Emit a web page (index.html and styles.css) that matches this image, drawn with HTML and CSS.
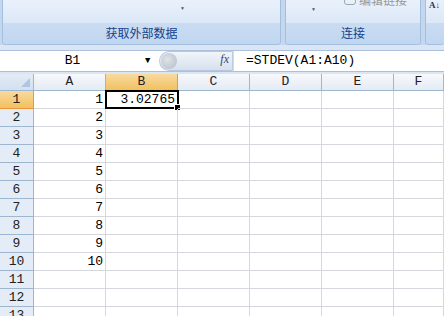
FILE: index.html
```html
<!DOCTYPE html>
<html lang="zh-CN">
<head>
    <meta charset="UTF-8">
    <title>STDEV</title>
    <link rel="stylesheet" href="styles.css">
</head>
<body>
    <div class="ribbon">
        <div class="group group-data">
            <div class="group-body"><span class="drop">▼</span></div>
            <div class="group-label">获取外部数据</div>
        </div>
        <div class="group group-link">
            <div class="group-body">
                <span class="drop">▼</span>
                <span class="cut-text"><span class="link-icon"></span>编辑链接</span>
            </div>
            <div class="group-label">连接</div>
        </div>
        <div class="group group-sort">
            <div class="group-body"><span class="sort-icon">A<span class="arrow">↓</span></span></div>
            <div class="group-label"></div>
        </div>
    </div>
    <div class="strip"></div>
    <div class="formula-bar">
        <div class="name-box">B1</div>
        <div class="name-drop">▼</div>
        <div class="fx-pill"><span class="knob"></span><span class="fx">fx</span></div>
        <div class="formula">=STDEV(A1:A10)</div>
    </div>
    <div class="strip thin"></div>
    <div class="sheet">
        <div class="corner"></div>
        <div class="col-head">A</div>
        <div class="col-head active">B</div>
        <div class="col-head">C</div>
        <div class="col-head">D</div>
        <div class="col-head">E</div>
        <div class="col-head">F</div>

        <div class="row-head active">1</div><div class="cell num">1</div><div class="cell num selected">3.02765<span class="handle"></span></div><div class="cell"></div><div class="cell"></div><div class="cell"></div><div class="cell"></div>
        <div class="row-head">2</div><div class="cell num">2</div><div class="cell"></div><div class="cell"></div><div class="cell"></div><div class="cell"></div><div class="cell"></div>
        <div class="row-head">3</div><div class="cell num">3</div><div class="cell"></div><div class="cell"></div><div class="cell"></div><div class="cell"></div><div class="cell"></div>
        <div class="row-head">4</div><div class="cell num">4</div><div class="cell"></div><div class="cell"></div><div class="cell"></div><div class="cell"></div><div class="cell"></div>
        <div class="row-head">5</div><div class="cell num">5</div><div class="cell"></div><div class="cell"></div><div class="cell"></div><div class="cell"></div><div class="cell"></div>
        <div class="row-head">6</div><div class="cell num">6</div><div class="cell"></div><div class="cell"></div><div class="cell"></div><div class="cell"></div><div class="cell"></div>
        <div class="row-head">7</div><div class="cell num">7</div><div class="cell"></div><div class="cell"></div><div class="cell"></div><div class="cell"></div><div class="cell"></div>
        <div class="row-head">8</div><div class="cell num">8</div><div class="cell"></div><div class="cell"></div><div class="cell"></div><div class="cell"></div><div class="cell"></div>
        <div class="row-head">9</div><div class="cell num">9</div><div class="cell"></div><div class="cell"></div><div class="cell"></div><div class="cell"></div><div class="cell"></div>
        <div class="row-head">10</div><div class="cell num">10</div><div class="cell"></div><div class="cell"></div><div class="cell"></div><div class="cell"></div><div class="cell"></div>
        <div class="row-head">11</div><div class="cell"></div><div class="cell"></div><div class="cell"></div><div class="cell"></div><div class="cell"></div><div class="cell"></div>
        <div class="row-head">12</div><div class="cell"></div><div class="cell"></div><div class="cell"></div><div class="cell"></div><div class="cell"></div><div class="cell"></div>
        <div class="row-head">13</div><div class="cell"></div><div class="cell"></div><div class="cell"></div><div class="cell"></div><div class="cell"></div><div class="cell"></div>
    </div>
</body>
</html>
```

FILE: styles.css
```css
body {
    margin: 0;
    width: 444px;
    height: 316px;
    overflow: hidden;
    background: #fff;
    font-family: "Liberation Mono", monospace;
}
.ribbon {
    display: flex;
    gap: 4px;
    height: 45px;
    padding-left: 2px;
    background: #c4d7ee;
    overflow: hidden;
}
.group {
    display: flex;
    flex-direction: column;
    box-sizing: border-box;
    height: 45px;
    border: 1px solid #a3bfe0;
    border-top: none;
    border-radius: 0 0 4px 4px;
    overflow: hidden;
}
.group-data { width: 279px; }
.group-link { width: 136px; }
.group-sort { flex: 1; border-right: none; }
.group-body {
    position: relative;
    height: 23px;
    background: linear-gradient(#e9f1fb, #dce8f7);
}
.group-label {
    flex: 1;
    background: linear-gradient(#c9dcf2, #c1d6f0);
    color: #15428b;
    font: 12px "Noto Sans CJK SC", sans-serif;
    text-align: center;
    line-height: 20px;
}
.drop {
    position: absolute;
    top: 6px;
    font-size: 5px;
    color: #555;
}
.group-data .drop { left: 178px; }
.group-link .drop { left: 26px; top: 7px; }
.cut-text {
    position: absolute;
    top: -9px;
    left: 58px;
    font: 12px "Noto Sans CJK SC", sans-serif;
    color: #999;
}
.link-icon {
    display: inline-block;
    width: 10px;
    height: 5px;
    border: 1px solid #9aa;
    border-radius: 3px;
    margin-right: 3px;
}
.sort-icon {
    position: absolute;
    top: 0;
    left: 3px;
    font: bold 9px "Liberation Serif", serif;
    color: #334;
}
.arrow { font-size: 9px; }
.strip {
    height: 5px;
    background: #dbe6f4;
}
.strip.thin { height: 2px; }
.formula-bar {
    display: flex;
    height: 22px;
    box-sizing: border-box;
    border-top: 1px solid #aac0dc;
    border-bottom: 1px solid #aac0dc;
    background: #fff;
    font-size: 13px;
    line-height: 20px;
}
.name-box {
    width: 145px;
    text-align: center;
    color: #000;
}
.name-drop {
    width: 14px;
    font-size: 9px;
    color: #000;
}
.fx-pill {
    position: relative;
    width: 74px;
    height: 20px;
    box-sizing: border-box;
    border-radius: 10px 0 0 10px;
    border: 1px solid #b8c8dc;
    border-right: 1px solid #bccbdd;
    background: linear-gradient(#f1f5fa, #d6e0ee);
}
.knob {
    position: absolute;
    left: 1px;
    top: 1px;
    width: 16px;
    height: 16px;
    border-radius: 50%;
    background: radial-gradient(circle at 40% 40%, #dfe3e8, #b4bcc6);
}
.fx {
    position: absolute;
    right: 3px;
    top: 0;
    font: italic 12px "Liberation Serif", serif;
    color: #445;
}
.formula {
    flex: 1;
    padding-left: 12px;
    border-left: 1px solid #d3dce8;
    color: #000;
}
.sheet {
    display: grid;
    grid-template-columns: 34px repeat(5, 72px) 1fr;
    grid-template-rows: 17px;
    grid-auto-rows: 18px;
    font-size: 13px;
}
.corner, .col-head, .row-head, .cell {
    box-sizing: border-box;
    border-right: 1px solid #d4d7dc;
    border-bottom: 1px solid #d4d7dc;
}
.corner {
    position: relative;
    background: linear-gradient(#e3ebf6, #d3e0f0);
    border-color: #9eb6ce;
}
.corner::after {
    content: "";
    position: absolute;
    right: 3px;
    bottom: 3px;
    border-left: 9px solid transparent;
    border-bottom: 9px solid #b1c5e0;
}
.col-head {
    background: linear-gradient(#f6f8fc, #e5ebf4);
    border-color: #9eb6ce;
    text-align: center;
    line-height: 16px;
    color: #222;
}
.row-head {
    background: #e4ecf7;
    border-color: #9eb6ce;
    text-align: center;
    line-height: 17px;
    color: #222;
}
.col-head.active, .row-head.active {
    background: linear-gradient(#f9d99f, #f1c15f);
    border-color: #f29536;
}
.cell {
    position: relative;
    line-height: 17px;
    color: #000;
}
.num {
    text-align: right;
    padding-right: 2px;
}
.selected {
    border: 2px solid #000;
    margin: -1px 0 0 -1px;
    width: 74px;
    height: 19px;
    line-height: 15px;
}
.handle {
    position: absolute;
    right: -4px;
    bottom: -4px;
    width: 5px;
    height: 5px;
    background: #000;
    border: 1px solid #fff;
}
```
